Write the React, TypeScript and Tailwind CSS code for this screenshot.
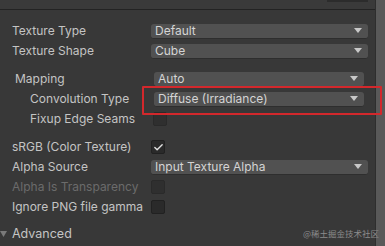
import { Check } from "lucide-react";

function Arrow() {
    return (
        <svg width="8" height="5" viewBox="0 0 8 5" className="shrink-0">
            <path d="M0 0H8L4 5Z" fill="#c8c8c8" />
        </svg>
    );
}

function Dropdown({ value, className = "" }: { value: string; className?: string }) {
    return (
        <div className={`h-[15px] flex items-center justify-between pl-[4px] pr-[6px] rounded-[3px] bg-[#515151] border-b border-[#2e2e2e] text-[#d4d4d4] ${className}`}>
            <span className="leading-none">{value}</span>
            <Arrow />
        </div>
    );
}

function Checkbox({ checked = false, dim = false, className = "" }: { checked?: boolean; dim?: boolean; className?: string }) {
    return (
        <div className={`w-[14px] h-[14px] rounded-[2px] flex items-center justify-center border ${dim ? "bg-[#2f2f2f] border-[#2a2a2a]" : "bg-[#2a2a2a] border-[#212121]"} ${className}`}>
            {checked && <Check className="w-[11px] h-[11px] text-[#e0e0e0]" strokeWidth={3} />}
        </div>
    );
}

function Row({ label, indent = "pl-[12px]", dim = false, children }: { label: string; indent?: string; dim?: boolean; children: React.ReactNode }) {
    return (
        <div className={`h-[20px] flex items-center ${indent}`}>
            <span className={`flex-1 ${dim ? "text-[#6b6b6b]" : "text-[#c4c4c4]"}`}>{label}</span>
            {children}
        </div>
    );
}

export default function App() {
    return (
        <div className="w-[385px] h-[246px] overflow-hidden flex bg-[#383838] text-[12px] font-['Inter','Liberation_Sans',sans-serif] relative">
            <div className="flex-1 flex flex-col">
                <div className="h-[10px] shrink-0 border-b border-[#232323] bg-[#3a3a3a] flex justify-end pr-[7px]">
                    <div className="w-[41px] h-[2px] bg-[#2c2c2c]" />
                </div>
                <div className="flex flex-col pr-[7px] pt-[11px]">
                    <Row label="Texture Type">
                        <Dropdown value="Default" className="w-[217px]" />
                    </Row>
                    <Row label="Texture Shape">
                        <Dropdown value="Cube" className="w-[217px]" />
                    </Row>
                    <div className="flex flex-col pt-[8px] pr-[4px]">
                        <Row label="Mapping" indent="pl-[15px]">
                            <Dropdown value="Auto" className="w-[210px]" />
                        </Row>
                        <Row label="Convolution Type" indent="pl-[30px]">
                            <Dropdown value="Diffuse (Irradiance)" className="w-[210px]" />
                        </Row>
                        <Row label="Fixup Edge Seams" indent="pl-[30px]">
                            <div className="w-[211px]">
                                <Checkbox dim />
                            </div>
                        </Row>
                    </div>
                    <div className="flex flex-col pt-[8px]">
                        <Row label="sRGB (Color Texture)">
                            <div className="w-[217px]">
                                <Checkbox checked />
                            </div>
                        </Row>
                        <Row label="Alpha Source">
                            <Dropdown value="Input Texture Alpha" className="w-[217px]" />
                        </Row>
                        <Row label="Alpha Is Transparency" dim>
                            <div className="w-[217px]">
                                <Checkbox dim />
                            </div>
                        </Row>
                        <Row label="Ignore PNG file gamma">
                            <div className="w-[217px]">
                                <Checkbox />
                            </div>
                        </Row>
                    </div>
                    <div className="h-[20px] mt-[7px] flex items-center gap-[5px]">
                        <svg width="7" height="6" viewBox="0 0 7 6">
                            <path d="M0 0H7L3.5 6Z" fill="#7a7a7a" />
                        </svg>
                        <span className="text-[#c4c4c4] text-[12.5px]">Advanced</span>
                    </div>
                    <div className="pl-[151px] pr-[3px] mt-[3px]">
                        <div className="h-[10px] rounded-t-[3px] bg-[#515151]" />
                    </div>
                </div>
            </div>
            <div className="w-[10px] shrink-0 bg-[#595959] border-l border-[#2e2e2e]" />
            <div className="absolute left-[142px] top-[86px] w-[240px] h-[29px] border-2 border-[#d3282c] rounded-[1px]" />
            <span className="absolute left-[303px] top-[227px] text-[8.5px] text-[#8c8c8c] font-['Noto_Sans_CJK_SC',sans-serif]">@稀土掘金技术社区</span>
        </div>
    );
}
